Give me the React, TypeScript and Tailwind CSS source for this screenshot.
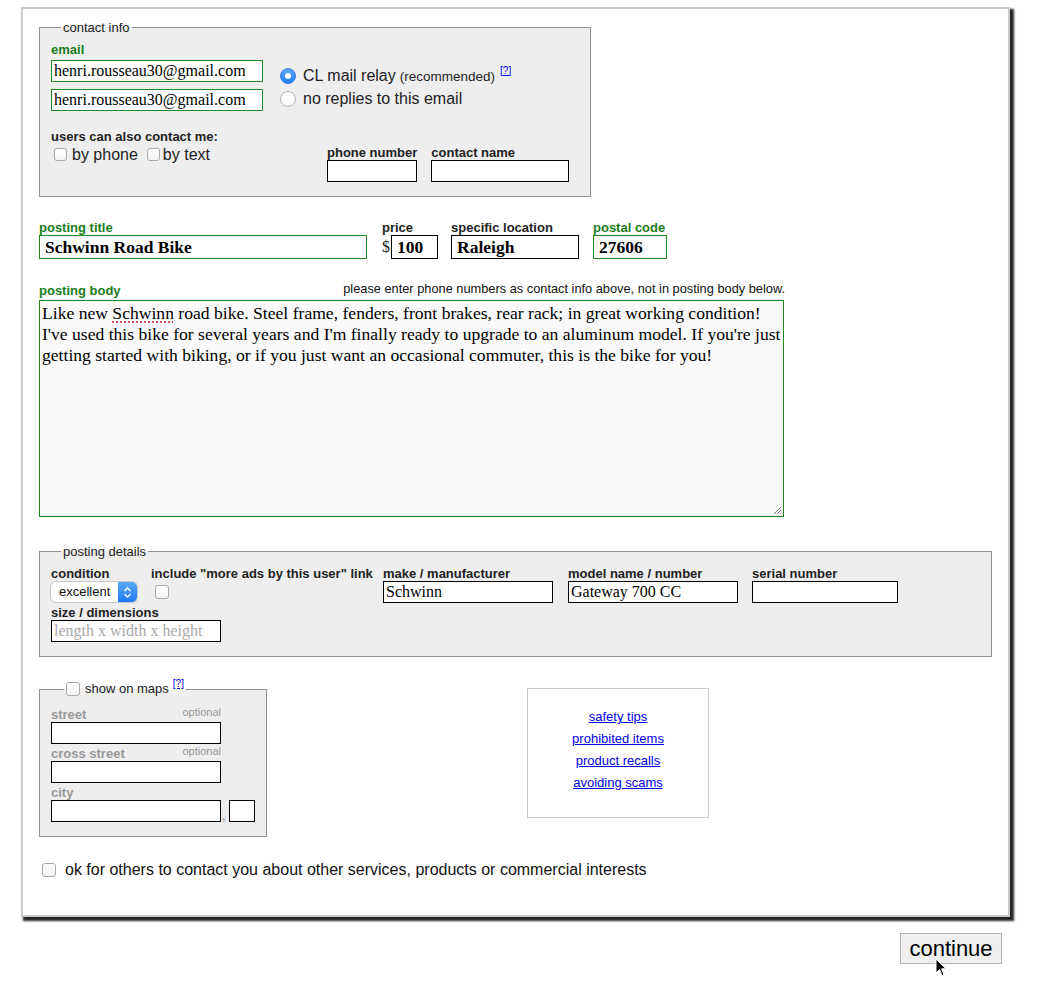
import React from "react";

const sans = { fontFamily: '"Liberation Sans", Arial, sans-serif' };

function Check({ className = "" }: { className?: string }) {
  return (
    <span
      className={
        "shrink-0 w-[13px] h-[13px] rounded-[3px] border border-[#a9a9a9] bg-gradient-to-b from-white to-[#f3f3f3] " +
        className
      }
    />
  );
}

export default function App() {
  const label = "block text-[13px] leading-[15px] font-bold text-[#222] whitespace-nowrap";
  const green = "block text-[13px] leading-[15px] font-bold text-[#1a7d1a] whitespace-nowrap";
  const gray = "block text-[13px] leading-[15px] font-bold text-[#999] whitespace-nowrap";
  const serif = "font-['Liberation_Serif',_'Times_New_Roman',_serif]";
  const inputBase = "block h-[22px] border bg-white text-[16px] leading-[20px] px-[2px] whitespace-nowrap " + serif;
  const inputBlack = inputBase + " border-black";
  const inputGreen = inputBase + " border-[#1f8a1f]";
  const big = " h-[24px] leading-[22px] font-bold text-[17.5px] pl-[5px] text-black";
  const help = "text-[10px] leading-[10px] text-[#0000ee] underline";

  return (
    <div className="w-[1042px] h-[983px] bg-white pl-[21px] pt-[7px] relative" style={sans}>
      <div className="w-[989px] h-[910px] border-2 border-[#cacaca] bg-white shadow-[3px_3px_2px_1px_#262626] pl-[16px] pt-[11px]">
        {/* contact info */}
        <fieldset className="w-[552px] border border-[#8f8f8f] bg-[#eeeeee] pl-[11px] pt-[7px] pb-[14px] m-0">
          <legend className="ml-[10px] px-[2px] text-[13px] leading-[15px] text-[#222]">contact info</legend>
          <div className="flex">
            <div className="w-[212px]">
              <span className={green}>email</span>
              <div className={inputGreen + " mt-[3px] w-[212px] text-black"}>henri.rousseau30@gmail.com</div>
              <div className={inputGreen + " mt-[7px] w-[212px] text-black"}>henri.rousseau30@gmail.com</div>
            </div>
            <div className="ml-[17px] pt-[22px]">
              <div className="flex items-center h-[23px]">
                <span className="w-[16px] h-[16px] rounded-full bg-gradient-to-b from-[#5aa9fb] to-[#1c7ff6] border border-[#2a7fe0] flex items-center justify-center">
                  <span className="w-[6px] h-[6px] rounded-full bg-white" />
                </span>
                <span className="ml-[7px] text-[16px] text-[#222]">CL mail relay</span>
                <span className="ml-[4px] text-[13.5px] text-[#222] relative top-[2px]">(recommended)</span>
                <a className={help + " ml-[5px] relative -top-[5px]"}>[?]</a>
              </div>
              <div className="flex items-center h-[23px]">
                <span className="w-[16px] h-[16px] rounded-full bg-white border border-[#b0b0b0]" />
                <span className="ml-[7px] text-[16px] text-[#222]">no replies to this email</span>
              </div>
            </div>
          </div>
          <div className="flex items-start mt-[18px]">
            <div className="w-[276px]">
              <span className={label}>users can also contact me:</span>
              <div className="flex items-center h-[19px] mt-[1px] ml-[3px]">
                <Check />
                <span className="ml-[5px] text-[16px] text-[#222]">by phone</span>
                <Check className="ml-[9px]" />
                <span className="ml-[3px] text-[16px] text-[#222]">by text</span>
              </div>
            </div>
            <div className="mt-[16px]">
              <span className={label}>phone number</span>
              <div className={inputBlack + " w-[90px]"} />
            </div>
            <div className="mt-[16px] ml-[14px]">
              <span className={label}>contact name</span>
              <div className={inputBlack + " w-[138px]"} />
            </div>
          </div>
        </fieldset>

        {/* title row */}
        <div className="flex items-start mt-[23px]">
          <div>
            <span className={green}>posting title</span>
            <div className={inputGreen + big + " w-[328px]"}>Schwinn Road Bike</div>
          </div>
          <div className="ml-[15px]">
            <span className={label}>price</span>
            <div className="flex items-center">
              <span className={"text-[16px] text-[#222] " + serif}>$</span>
              <div className={inputBlack + big + " ml-[1px] w-[47px]"}>100</div>
            </div>
          </div>
          <div className="ml-[13px]">
            <span className={label}>specific location</span>
            <div className={inputBlack + big + " w-[128px]"}>Raleigh</div>
          </div>
          <div className="ml-[14px]">
            <span className={green}>postal code</span>
            <div className={inputGreen + big + " w-[74px]"}>27606</div>
          </div>
        </div>

        {/* body */}
        <div className="mt-[24px] w-[745px] flex justify-between items-start h-[17px]">
          <span className={green}>posting body</span>
          <span className="text-[12.8px] leading-[15px] text-[#111] relative -top-[2px] -mr-[1px] whitespace-nowrap">
            please enter phone numbers as contact info above, not in posting body below.
          </span>
        </div>
        <div className={"relative w-[745px] h-[217px] border border-[#1f8a1f] bg-[#fafafa] text-[17.6px] leading-[21px] pl-[2px] pt-[2px] text-black " + serif}>
          <div className="whitespace-nowrap">
            Like new{" "}
            <span className="underline decoration-dotted decoration-[#e23a3a] underline-offset-[3px]">Schwinn</span> road bike. Steel frame, fenders, front brakes, rear rack; in great working condition!
          </div>
          <div className="whitespace-nowrap">
            I've used this bike for several years and I'm finally ready to upgrade to an aluminum model. If you're just
          </div>
          <div className="whitespace-nowrap">
            getting started with biking, or if you just want an occasional commuter, this is the bike for you!
          </div>
          <svg className="absolute right-[1px] bottom-[1px]" width="9" height="9" viewBox="0 0 9 9">
            <path d="M8 1 L1 8 M8 4 L4 8 M8 7 L7 8" stroke="#777" strokeWidth="1" />
          </svg>
        </div>

        {/* posting details */}
        <fieldset className="mt-[27px] w-[953px] border border-[#8f8f8f] bg-[#eeeeee] pl-[11px] pt-[7px] pb-[14px] m-0">
          <legend className="ml-[10px] px-[2px] text-[13px] leading-[15px] text-[#222]">posting details</legend>
          <div className="flex items-start">
            <div className="w-[100px]">
              <span className={label}>condition</span>
              <div className="mt-[1px] w-[86px] h-[20px] rounded-[5px] bg-white shadow-[0_0_0_1px_#c8c8c8,0_1px_1px_rgba(0,0,0,0.15)] flex overflow-hidden">
                <span className="flex-1 text-[13px] leading-[20px] pl-[8px] text-[#111]">excellent</span>
                <span className="w-[19px] h-[20px] bg-gradient-to-b from-[#5aa9fb] to-[#1c78f0] flex items-center justify-center">
                  <svg width="9" height="13" viewBox="0 0 9 13">
                    <path d="M1.5 5 L4.5 2 L7.5 5 M1.5 8 L4.5 11 L7.5 8" stroke="white" strokeWidth="1.4" fill="none" />
                  </svg>
                </span>
              </div>
            </div>
            <div className="w-[232px]">
              <span className={label}>include "more ads by this user" link</span>
              <Check className="block mt-[4px] ml-[4px] !w-[14px] !h-[14px]" />
            </div>
            <div className="w-[185px]">
              <span className={label}>make / manufacturer</span>
              <div className={inputBlack + " w-[170px] text-black"}>Schwinn</div>
            </div>
            <div className="w-[184px]">
              <span className={label}>model name / number</span>
              <div className={inputBlack + " w-[170px] text-black"}>Gateway 700 CC</div>
            </div>
            <div>
              <span className={label}>serial number</span>
              <div className={inputBlack + " w-[146px]"} />
            </div>
          </div>
          <div className="mt-[2px]">
            <span className={label}>size / dimensions</span>
            <div className={inputBlack + " w-[170px] text-[#a9a9a9]"}>length x width x height</div>
          </div>
        </fieldset>

        {/* maps + links */}
        <div className="flex items-start mt-[24px]">
          <fieldset className="w-[228px] border border-[#8f8f8f] bg-[#eeeeee] pl-[11px] pt-[10px] pb-[14px] m-0">
            <legend className="ml-[13px] px-[2px] flex items-center h-[16px]">
              <Check className="block !w-[14px] !h-[14px]" />
              <span className="ml-[5px] text-[13px] text-[#222]">show on maps</span>
              <a className={help + " ml-[4px] relative -top-[5px]"}>[?]</a>
            </legend>
            <div className="w-[170px] flex justify-between items-end">
              <span className={gray}>street</span>
              <span className="text-[11px] leading-[13px] text-[#999] relative -top-[3px]">optional</span>
            </div>
            <div className={inputBlack + " w-[170px]"} />
            <div className="w-[170px] flex justify-between items-end mt-[2px]">
              <span className={gray}>cross street</span>
              <span className="text-[11px] leading-[13px] text-[#999] relative -top-[3px]">optional</span>
            </div>
            <div className={inputBlack + " w-[170px]"} />
            <span className={gray + " mt-[2px]"}>city</span>
            <div className="flex items-end">
              <div className={inputBlack + " w-[170px]"} />
              <span className="text-[12px] leading-[12px] font-bold text-[#999] ml-[1px] w-[7px]">,</span>
              <div className={inputBlack + " w-[26px]"} />
            </div>
          </fieldset>
          <div className="ml-[260px] mt-[7px] w-[182px] h-[130px] border border-[#cccccc] pt-[17px] flex flex-col items-center">
            {["safety tips", "prohibited items", "product recalls", "avoiding scams"].map((t) => (
              <a key={t} className="text-[13px] leading-[22px] text-[#0000ee] underline">
                {t}
              </a>
            ))}
          </div>
        </div>

        {/* opt-in */}
        <div className="flex items-center mt-[23px] h-[20px] ml-[3px]">
          <Check className="block !w-[14px] !h-[14px]" />
          <span className="ml-[9px] text-[16px] text-[#111]">
            ok for others to contact you about other services, products or commercial interests
          </span>
        </div>
      </div>

      <div className="w-[981px] flex justify-end mt-[16px]">
        <div className="relative w-[102px] h-[31px] border border-[#b3b3b3] bg-[#efefef] flex items-center justify-center text-[22px] text-black">
          continue
          <svg className="absolute left-[34px] top-[24px]" width="12" height="19" viewBox="0 0 12 19">
            <path d="M1 1 L1 15 L4.5 11.5 L7 17.5 L9 16.6 L6.6 10.8 L11 10.8 Z" fill="black" stroke="white" strokeWidth="1" />
          </svg>
        </div>
      </div>
    </div>
  );
}
